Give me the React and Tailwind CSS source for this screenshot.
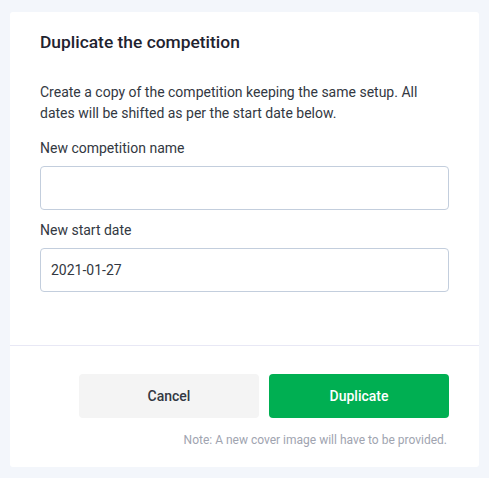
import { useState } from 'react';

const DuplicateCompetition = () => {
    const [name, setName] = useState('');
    const [startDate, setStartDate] = useState('2021-01-27');

    return (
        <div className="bg-white rounded-[3px] mx-[10px] mt-[12px] h-[455px] flex flex-col">
            <div className="px-[30px] pt-[18px]">
                <h2 className="text-[17.4px] leading-[24px] font-medium text-[#1f2330]">Duplicate the competition</h2>

                <p className="mt-[28px] text-[14px] leading-[21px] text-[#333842]">
                    Create a copy of the competition keeping the same setup. All dates will be shifted as per the start date below.
                </p>

                <label className="block mt-[14px] text-[14px] leading-[21px] text-[#333842]">New competition name</label>
                <input
                    type="text"
                    value={name}
                    onChange={(e) => setName(e.target.value)}
                    className="mt-[7px] block w-full h-[44px] px-[11px] rounded-[4px] border border-[#c3cedd] text-[14px] text-[#333842] outline-none"
                />

                <label className="block mt-[10px] text-[14px] leading-[21px] text-[#333842]">New start date</label>
                <input
                    type="text"
                    value={startDate}
                    onChange={(e) => setStartDate(e.target.value)}
                    className="mt-[7px] block w-full h-[44px] px-[10px] rounded-[4px] border border-[#c3cedd] text-[14px] text-[#333842] outline-none"
                />
            </div>

            <div className="mt-[53px] border-t border-[#e8e8f5]" />

            <div className="px-[30px] pt-[28px]">
                <div className="flex justify-end gap-[10px]">
                    <button className="w-[180px] h-[44px] rounded-[4px] bg-[#f4f4f4] text-[14px] font-medium text-[#333842]">
                        Cancel
                    </button>
                    <button className="w-[180px] h-[44px] rounded-[4px] bg-[#00af52] text-[14px] font-medium text-white">
                        Duplicate
                    </button>
                </div>
                <p className="mt-[14px] pr-[2px] text-right text-[12px] leading-[16px] text-[#a0a4b0]">
                    Note: A new cover image will have to be provided.
                </p>
            </div>
        </div>
    );
};

export default function App() {
    return (
        <div className="w-[489px] h-[478px] bg-[#f3f6fb] overflow-hidden font-['Roboto',sans-serif]">
            <DuplicateCompetition />
        </div>
    );
}
